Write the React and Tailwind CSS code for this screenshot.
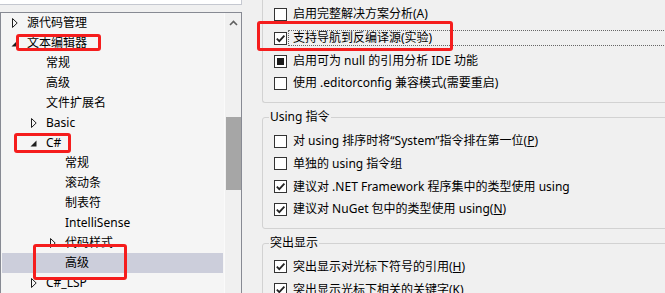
import React from "react";

const FONT = "font-['Noto_Sans','Noto_Sans_CJK_SC',sans-serif]";

function Tri({ open }) {
  return open ? (
    <svg width="7" height="7" viewBox="0 0 7 7" className="block">
      <polygon points="6.5,0.5 6.5,6.5 0.5,6.5" fill="#1e1e1e" />
    </svg>
  ) : (
    <svg width="6" height="10" viewBox="0 0 6 10" className="block ml-px">
      <polygon points="0.5,0.5 5.2,5 0.5,9.5" fill="none" stroke="#1e1e1e" strokeWidth="1" />
    </svg>
  );
}

const treeItems = [
  { t: "源代码管理", l: 0, tri: "c" },
  { t: "文本编辑器", l: 0, tri: "o" },
  { t: "常规", l: 1 },
  { t: "高级", l: 1 },
  { t: "文件扩展名", l: 1 },
  { t: "Basic", l: 1, tri: "c" },
  { t: "C#", l: 1, tri: "o" },
  { t: "常规", l: 2 },
  { t: "滚动条", l: 2 },
  { t: "制表符", l: 2 },
  { t: "IntelliSense", l: 2 },
  { t: "代码样式", l: 2, tri: "c" },
  { t: "高级", l: 2, sel: true },
  { t: "C#_LSP", l: 1, tri: "c" },
];

const pads = ["pl-[9px]", "pl-[28px]", "pl-[47px]"];

function Check({ state }) {
  return (
    <div className="w-[13px] h-[13px] shrink-0 border border-[#333333] bg-white flex items-center justify-center">
      {state === "on" && (
        <svg width="11" height="11" viewBox="0 0 11 11" className="block">
          <path d="M1.8 5.6 L4.3 8.1 L9.4 2.6" fill="none" stroke="#222222" strokeWidth="1.8" />
        </svg>
      )}
      {state === "ind" && <div className="w-[7px] h-[7px] bg-[#1a1a1a]" />}
    </div>
  );
}

function Row({ state, h, focus, children }) {
  return (
    <div className={`flex items-center pl-[11px] ${h}`}>
      <Check state={state} />
      <div
        className={`ml-px flex-1 h-[16px] flex items-center px-[4px] border ${
          focus ? "border-dotted border-[#666666]" : "border-transparent"
        }`}
      >
        <span className="whitespace-nowrap leading-none">{children}</span>
      </div>
    </div>
  );
}

const U = ({ children }) => <span className="underline underline-offset-1">{children}</span>;

export default function App() {
  return (
    <div className={`relative w-[665px] h-[293px] overflow-hidden flex bg-[#f0f0f0] text-[12px] text-[#000000] ${FONT}`}>
      {/* Left column */}
      <div className="w-[242px] shrink-0 flex flex-col">
        <div className="h-[5px] bg-white border-b border-r border-[#c5c8d0]" />
        <div className="mt-[7px] flex-1 flex border-t border-l border-r border-[#878a93] min-h-0">
          <div className="flex-1 bg-[#f5f5f5] flex flex-col">
            {treeItems.map((it, i) => (
              <div
                key={i}
                className={`mx-px h-[20px] shrink-0 flex items-center ${pads[it.l]} ${it.sel ? "bg-[#cccedb]" : ""}`}
              >
                <div className="w-[16px] shrink-0 flex items-center">
                  {it.tri && <Tri open={it.tri === "o"} />}
                </div>
                <span className="whitespace-nowrap leading-none">{it.t}</span>
              </div>
            ))}
          </div>
          <div className="w-[17px] shrink-0 bg-[#f0f0f0] border-l border-[#fafafa] flex flex-col items-center">
            <svg width="9" height="6" viewBox="0 0 9 6" className="block mt-[7px]">
              <path d="M1 5 L4.5 1.5 L8 5" fill="none" stroke="#606060" strokeWidth="1.6" />
            </svg>
            <div className="w-[15px] h-[73px] bg-[#a6a6a6] mt-[91px]" />
          </div>
        </div>
      </div>

      {/* Right column */}
      <div className="flex-1 pl-[20px] flex flex-col min-w-0">
        {/* Group 1 */}
        <div className="w-[440px] shrink-0 border-l border-b border-[#d2d2d2] rounded-bl-[3px] pt-[2px] pb-[8px]">
          <Row state="off" h="h-[24px]">启用完整解决方案分析(A)</Row>
          <Row state="on" h="h-[24px]" focus>支持导航到反编译源(实验)</Row>
          <Row state="ind" h="h-[22px]">启用可为 null 的引用分析 IDE 功能</Row>
          <Row state="off" h="h-[22px]">使用 .editorconfig 兼容模式(需要重启)</Row>
        </div>

        {/* Using group */}
        <div className="relative mt-[14px] w-[440px] shrink-0 border border-[#d2d2d2] rounded-[3px] pt-[12px] pb-[8px]">
          <span className="absolute -top-[9px] left-[6px] px-[1px] bg-[#f0f0f0] leading-[16px] whitespace-nowrap">Using 指令</span>
          <Row state="off" h="h-[22px]">对 using 排序时将“System”指令排在第一位(<U>P</U>)</Row>
          <Row state="off" h="h-[23px]">单独的 using 指令组</Row>
          <Row state="on" h="h-[23px]">建议对 .NET Framework 程序集中的类型使用 using</Row>
          <Row state="on" h="h-[22px]">建议对 NuGet 包中的类型使用 using(<U>N</U>)</Row>
        </div>

        {/* Highlight group */}
        <div className="relative mt-[14px] w-[440px] shrink-0 border border-[#d2d2d2] rounded-[3px] pt-[11px] pb-[8px]">
          <span className="absolute -top-[9px] left-[6px] px-[1px] bg-[#f0f0f0] leading-[16px] whitespace-nowrap">突出显示</span>
          <Row state="on" h="h-[23px]">突出显示对光标下符号的引用(<U>H</U>)</Row>
          <Row state="on" h="h-[23px]">突出显示光标下相关的关键字(<U>K</U>)</Row>
        </div>
      </div>

      {/* Red annotation boxes */}
      <div className="absolute left-[16px] top-[34px] w-[85px] h-[17px] border-[3px] border-[#f51d1d] rounded-[3px]" />
      <div className="absolute left-[14px] top-[133px] w-[57px] h-[20px] border-[3px] border-[#f51d1d] rounded-[3px]" />
      <div className="absolute left-[33px] top-[244px] w-[94px] h-[36px] border-[3px] border-[#f51d1d] rounded-[3px]" />
      <div className="absolute left-[257px] top-[21px] w-[196px] h-[30px] border-[3px] border-[#f51d1d] rounded-[3px]" />
    </div>
  );
}
